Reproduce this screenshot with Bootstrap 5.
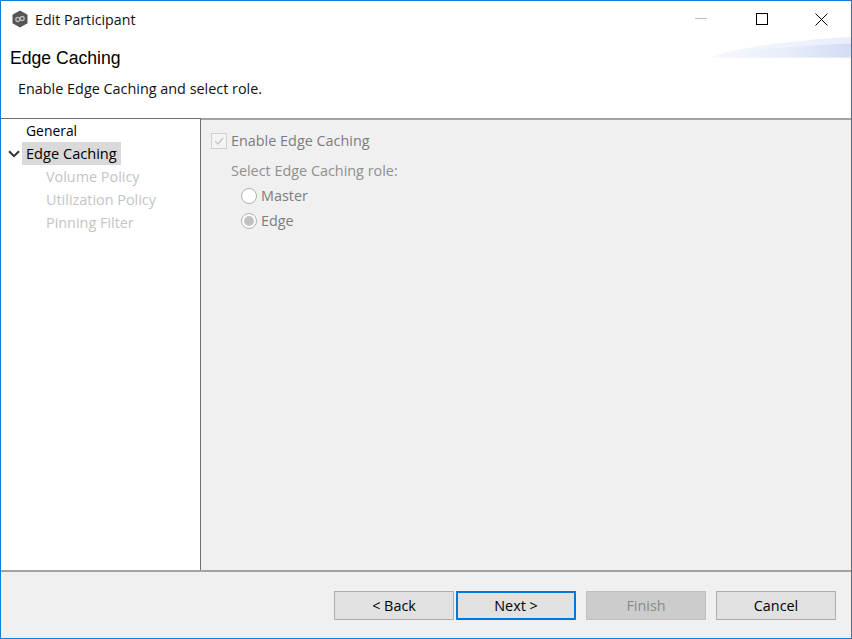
<!DOCTYPE html>
<html lang="en">
<head>
<meta charset="utf-8">
<title>Edit Participant</title>
<link href="https://cdn.jsdelivr.net/npm/bootstrap@5.3.0/dist/css/bootstrap.min.css" rel="stylesheet">
<style>
html,body{height:100%;margin:0;background:#f0f0f0}
body{font-family:"Open Sans","Noto Sans",sans-serif;font-size:14.4px;color:#000;overflow:hidden}
.win{width:852px;height:639px;border:1px solid #0f7fd8;background:#f0f0f0}
.tbar{height:36px;background:#fff;padding-left:10px;gap:6px}
.ttl{font-size:14.2px;line-height:37px;color:#111}
.wbtns{margin-left:auto}
.wb{width:60px;height:36px}
.hdr{height:81px;background:#fff;position:relative}
.hd1{font-family:"Liberation Sans",sans-serif;font-size:17.6px;line-height:20px;padding:11px 0 0 9px}
.hd2{font-size:14.4px;line-height:20px;padding:11px 0 0 17px;color:#111}
.swoosh{position:absolute;right:0;top:0}
.mid{height:452px}
.side{width:200px;background:#fff;border-right:1px solid #6e6e6e;border-top:1px solid #6e6e6e}
.tr{height:23px;line-height:23px;font-size:14.4px;white-space:nowrap}
.t0{padding-left:25px;font-size:13.9px}
.tsel{background:#d9d9d9;padding:0 4px;display:inline-block;height:23px;font-size:14.6px}
.tc{width:21px;display:flex;align-items:center;justify-content:center;padding-left:5px}
.t1{padding-left:45px;color:#c4c4c4}
.pane{flex:1;padding:10px 0 0 10px;color:#7d7d7d;font-size:14.4px;border-top:2px solid #a3a3a3}
.ln{height:22px;line-height:22px}
.cb{width:16px;height:16px;border:1px solid #cfcfcf;background:#f4f4f4;display:block}
.lbl1{margin-left:4px}
.sub{padding-left:20px;margin-top:8px;color:#8f8f8f}
.rd{padding-left:30px;margin-top:3px}
.rdo{width:16px;height:16px;border-radius:50%;border:1px solid #b0b0b0;background:#fff;display:flex;align-items:center;justify-content:center;margin-right:4px}
.dot{width:10px;height:10px;border-radius:50%;background:#c2c2c2}
.foot{height:68px;border-top:2px solid #a3a3a3;padding:19px 15px 0 333px;gap:2px}
.wbtn{width:120px;height:29px;border:1px solid #adadad;background:#e1e1e1;border-radius:0;padding:0;font-size:14.4px;color:#000;line-height:26px;text-align:center}
.wbtn.pri{border:2px solid #0078d7}
.wbtn.dis{background:#cccccc;border-color:#bfbfbf;color:#8a8a8a;margin-left:8px;margin-right:8px}
</style>
</head>
<body>
<div class="win d-flex flex-column">
  <div class="tbar d-flex align-items-center">
    <svg width="18" height="18" viewBox="0 0 18 18"><path d="M9 .5 16.500 4.700v8.600L9 17.500 1.500 13.300V4.700Z" fill="#555"/><circle cx="6.800" cy="9.500" r="2" fill="none" stroke="#bbb" stroke-width="1.300"/><circle cx="11.200" cy="8.500" r="2" fill="none" stroke="#bbb" stroke-width="1.300"/></svg>
    <span class="ttl">Edit Participant</span>
    <div class="wbtns d-flex">
      <div class="wb d-flex align-items-center justify-content-center"><svg width="13" height="13" viewBox="0 0 13 13"><path d="M0 5.500H12" stroke="#bdbdbd" fill="none"/></svg></div>
      <div class="wb d-flex align-items-center justify-content-center"><svg width="13" height="13" viewBox="0 0 13 13"><rect x="1.500" y=".5" width="11" height="11" fill="none" stroke="#000"/></svg></div>
      <div class="wb d-flex align-items-center justify-content-center"><svg width="13" height="13" viewBox="0 0 13 13"><path d="M.5.500 12.500 12.500M12.500.500 .5 12.500" stroke="#000" fill="none"/></svg></div>
    </div>
  </div>
  <div class="hdr">
    <svg class="swoosh" width="140" height="21" viewBox="0 0 140 21"><defs><linearGradient id="g" x1="0" x2="1"><stop offset="0" stop-color="#f5f7fc"/><stop offset="1" stop-color="#e9eefa"/></linearGradient><linearGradient id="h" x1="0" x2="1"><stop offset="0" stop-color="#f6f8fd"/><stop offset=".5" stop-color="#e9eefa"/><stop offset="1" stop-color="#d2dcf4"/></linearGradient></defs><path d="M0 20.500C25 10 85 3 140 0V20.500Z" fill="url(#g)"/><path d="M0 20.500C30 13 85 9 140 6.500V20.500Z" fill="url(#h)"/></svg>
    <div class="hd1">Edge Caching</div>
    <div class="hd2">Enable Edge Caching and select role.</div>
  </div>
  <div class="mid d-flex">
    <div class="side">
      <div class="tr t0">General</div>
      <div class="tr d-flex"><span class="tc"><svg width="12" height="8" viewBox="0 0 12 8"><path d="M1 1.200 6 6.200 11 1.200" fill="none" stroke="#333" stroke-width="2"/></svg></span><span class="tsel">Edge Caching</span></div>
      <div class="tr t1">Volume Policy</div>
      <div class="tr t1">Utilization Policy</div>
      <div class="tr t1">Pinning Filter</div>
    </div>
    <div class="pane">
      <div class="ln d-flex align-items-center"><span class="cb"><svg width="14" height="14" viewBox="0 0 14 14" class="d-block"><path d="M3 7 6 10 11 4" fill="none" stroke="#c6c6c6" stroke-width="1.300"/></svg></span><span class="lbl1">Enable Edge Caching</span></div>
      <div class="ln sub">Select Edge Caching role:</div>
      <div class="ln rd d-flex align-items-center"><span class="rdo"></span>Master</div>
      <div class="ln rd d-flex align-items-center"><span class="rdo"><span class="dot"></span></span>Edge</div>
    </div>
  </div>
  <div class="foot d-flex">
    <button type="button" class="wbtn">&lt; Back</button>
    <button type="button" class="wbtn pri">Next &gt;</button>
    <button type="button" class="wbtn dis">Finish</button>
    <button type="button" class="wbtn">Cancel</button>
  </div>
</div>
</body>
</html>
